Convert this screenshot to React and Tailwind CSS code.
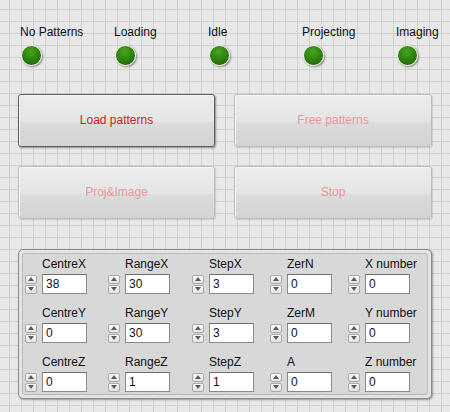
import React from "react";

const leds = ["No Patterns", "Loading", "Idle", "Projecting", "Imaging"];

const rows = [
  [["CentreX", "38"], ["RangeX", "30"], ["StepX", "3"], ["ZerN", "0"], ["X number", "0"]],
  [["CentreY", "0"], ["RangeY", "30"], ["StepY", "3"], ["ZerM", "0"], ["Y number", "0"]],
  [["CentreZ", "0"], ["RangeZ", "1"], ["StepZ", "1"], ["A", "0"], ["Z number", "0"]],
];

function Led({ label }) {
  return (
    <div className="flex w-[94px] shrink-0 flex-col items-start">
      <div className="-ml-[1px] text-[12px] leading-[15px] text-[#111]">{label}</div>
      <div className="mt-[5px] h-[21px] w-[21px] rounded-full border-[1.5px] border-[#f2f5ef] bg-[radial-gradient(circle_at_45%_30%,#4aa51c_0%,#2f8510_45%,#1d5a05_100%)] shadow-[1px_1px_2px_rgba(0,0,0,0.45)]" />
    </div>
  );
}

function Spin() {
  return (
    <div className="flex w-[12px] flex-col gap-[1px]">
      <div className="flex h-[9px] items-center justify-center rounded-[2px] border border-[#a9a9a9] bg-[linear-gradient(to_bottom,#fbfbfb,#e2e2e2)]">
        <svg width="6" height="4" viewBox="0 0 6 4"><path d="M3 0 L6 4 L0 4 Z" fill="#5a5a5a" /></svg>
      </div>
      <div className="flex h-[9px] items-center justify-center rounded-[2px] border border-[#a9a9a9] bg-[linear-gradient(to_bottom,#fbfbfb,#e2e2e2)]">
        <svg width="6" height="4" viewBox="0 0 6 4"><path d="M0 0 L6 0 L3 4 Z" fill="#5a5a5a" /></svg>
      </div>
    </div>
  );
}

function Num({ label, value }) {
  return (
    <div className="flex flex-col">
      <div className="ml-[17px] text-[12px] leading-[16px] text-[#111]">{label}</div>
      <div className="mt-[2px] flex items-center gap-[5px]">
        <Spin />
        <div className="h-[20px] w-[45px] border border-[#8a8a8a] border-t-[#6f6f6f] bg-white pl-[3px] text-[12px] leading-[18px] text-[#111]">
          {value}
        </div>
      </div>
    </div>
  );
}

function Btn({ label, active }) {
  return (
    <div
      className={
        "flex items-center justify-center rounded-[3px] border bg-[linear-gradient(to_bottom,#ececec_0%,#e5e5e5_52%,#dcdcdc_53%,#d3d3d3_100%)] pb-[2px] text-[12px] " +
        (active
          ? "border-[#5e5e5e] text-[#dc1520] shadow-[1px_1px_2px_rgba(0,0,0,0.4),inset_1px_1px_0_#f6f6f6]"
          : "border-[#bdbdbd] text-[#e9979c] shadow-[1px_1px_1px_rgba(0,0,0,0.12),inset_1px_1px_0_#f6f6f6]")
      }
    >
      {label}
    </div>
  );
}

export default function App() {
  return (
    <div className="flex h-[412px] w-[450px] flex-col overflow-hidden bg-[#e8e8e8] bg-[linear-gradient(to_right,#d0d0d0_1px,transparent_1px),linear-gradient(to_bottom,#d0d0d0_1px,transparent_1px)] bg-[length:12px_12px] bg-[position:9px_9px] font-['Liberation_Sans',Arial,sans-serif]">
      <div className="ml-[21px] mt-[25px] flex">
        {leds.map((l) => (
          <Led key={l} label={l} />
        ))}
      </div>

      <div className="ml-[18px] mt-[28px] grid grid-cols-[197px_198px] grid-rows-[53px_53px] gap-x-[19px] gap-y-[19px]">
        <Btn label="Load patterns" active />
        <Btn label="Free patterns" />
        <Btn label="Proj&Image" />
        <Btn label="Stop" />
      </div>

      <div className="ml-[18px] mt-[30px] h-[150px] w-[414px] rounded-[5px] border border-[#8c8c8c] bg-[#e3e3e3] p-[3px] shadow-[1px_1px_2px_rgba(0,0,0,0.35)]">
        <div className="h-full rounded-[3px] border border-[#b9b9b9] bg-[#d8d8d8] pl-[2px] pt-[2px]">
          <div className="grid grid-cols-[83px_84px_78px_78px_auto] gap-y-[11px]">
            {rows.flat().map(([l, v]) => (
              <Num key={l} label={l} value={v} />
            ))}
          </div>
        </div>
      </div>
    </div>
  );
}
